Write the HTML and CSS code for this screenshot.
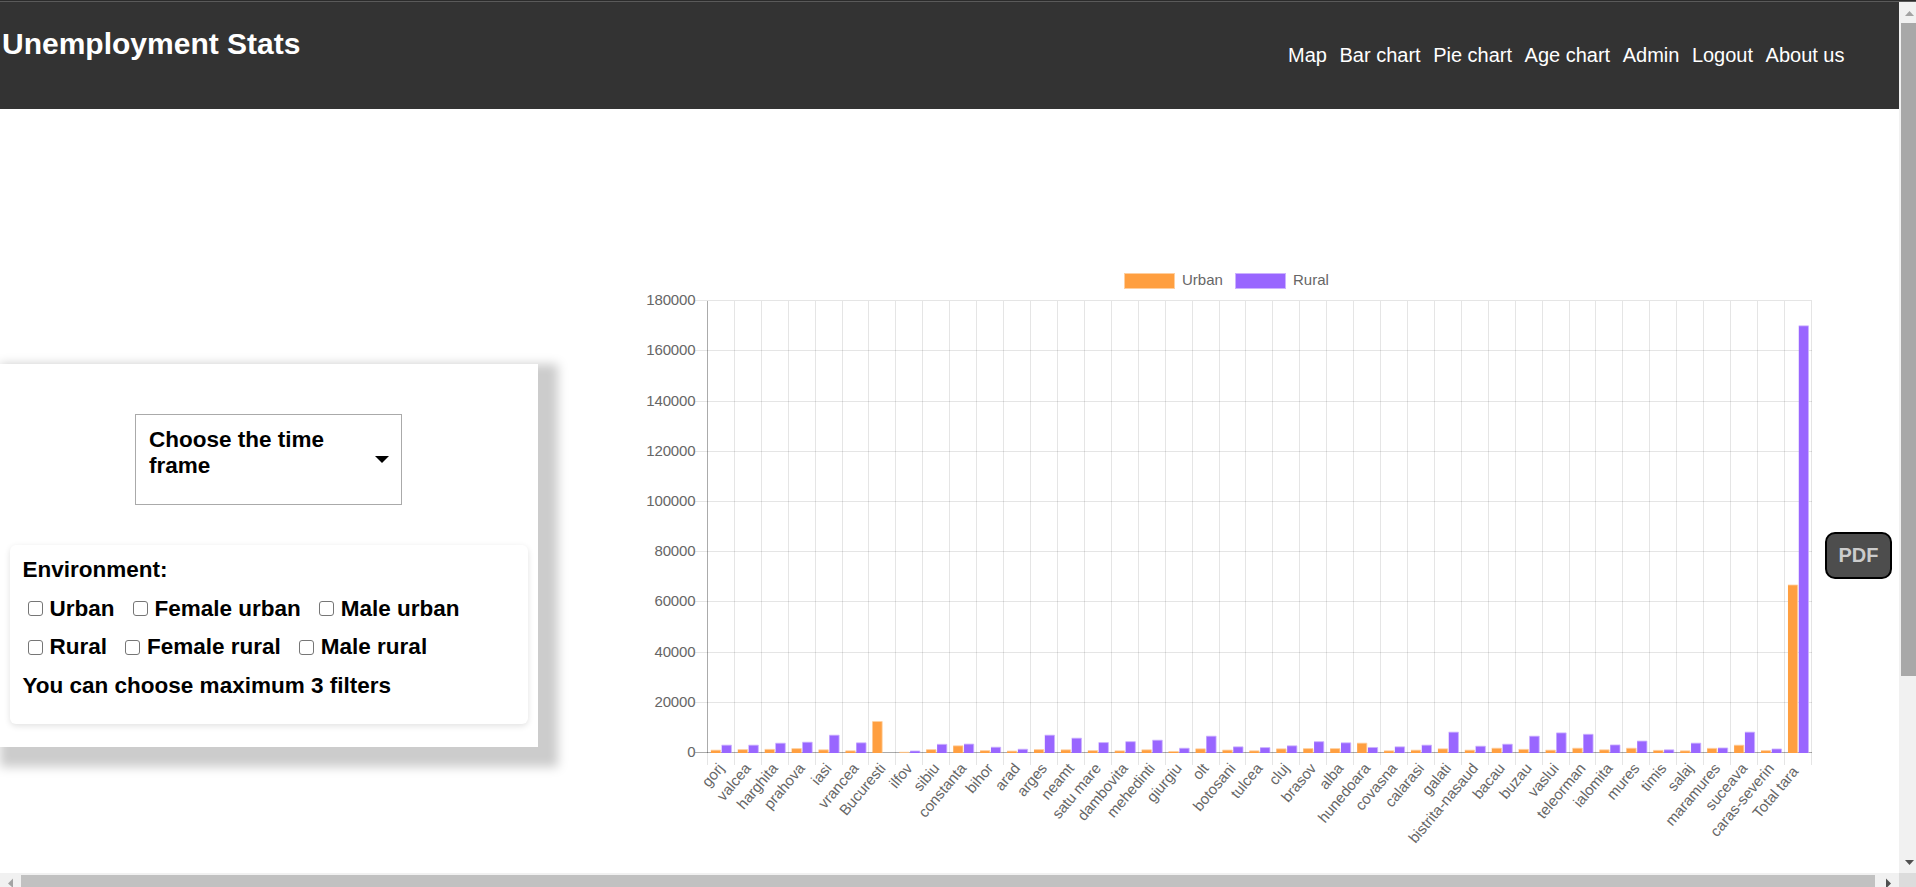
FILE: index.html
```html
<!DOCTYPE html>
<html lang="en">
<head>
<meta charset="utf-8">
<title>Unemployment Stats</title>
<link rel="stylesheet" href="styles.css">
</head>
<body>
<div class="window">
  <div class="viewport">
    <header class="header">
      <h1 class="title">Unemployment Stats</h1>
      <nav class="nav">
        <a>Map</a><a>Bar chart</a><a>Pie chart</a><a>Age chart</a><a>Admin</a><a>Logout</a><a>About us</a>
      </nav>
    </header>
    <main class="main">
      <section class="panel">
        <div class="timeframe">
          <span class="timeframe-label">Choose the time frame</span>
          <svg class="caret" width="14" height="7" viewBox="0 0 14 7"><path d="M0 0H14L7 7Z"/></svg>
        </div>
        <div class="filters">
          <div class="line">Environment:</div>
          <div class="line row">
            <label class="option"><input type="checkbox">Urban</label>
            <label class="option"><input type="checkbox">Female urban</label>
            <label class="option"><input type="checkbox">Male urban</label>
          </div>
          <div class="line row">
            <label class="option"><input type="checkbox">Rural</label>
            <label class="option"><input type="checkbox">Female rural</label>
            <label class="option"><input type="checkbox">Male rural</label>
          </div>
          <div class="line">You can choose maximum 3 filters</div>
        </div>
      </section>
      <svg class="chart" id="chart" width="1191" height="604" viewBox="630 260 1191 604"></svg>
      <button class="pdf">PDF</button>
    </main>
  </div>
  <div class="vscroll">
    <svg class="v-arrow" width="17" height="21" viewBox="0 0 17 21"><path class="arrow-off" d="M6 14L10.5 9L15 14Z"/></svg>
    <div class="v-thumb"></div>
    <svg class="v-down" width="17" height="21" viewBox="0 0 17 21"><path class="arrow-on" d="M6 8H15L10.5 13Z"/></svg>
  </div>
  <div class="hscroll">
    <svg width="21" height="14" viewBox="0 0 21 14"><path class="arrow-off" d="M13 5.5V14H12L8 10.5Z"/></svg>
    <div class="h-thumb"></div>
    <svg width="24" height="14" viewBox="0 0 24 14"><path class="arrow-on" d="M11 5.5L16 10.5L12.5 14H11Z"/></svg>
  </div>
  <div class="corner"></div>
</div>
<script src="chart.js"></script>
</body>
</html>
```
FILE: styles.css
```css
body { margin: 0; font-family: "Liberation Sans", Arial, sans-serif; background: #fff; overflow: hidden; }

.window {
  display: grid;
  grid-template: 871px 14px / 1899px 17px;
  width: 1916px;
  height: 887px;
  box-sizing: border-box;
  border-top: 1px solid #2b2b2b;
  padding-top: 1px;
  background: linear-gradient(#5a5a5a 0 1px, #fff 1px);
}
.viewport { overflow: hidden; background: #fff; }

.header {
  display: flex;
  justify-content: space-between;
  height: 107px;
  box-sizing: border-box;
  padding: 17px 54.5px 0 2px;
  background: #333;
  color: #fff;
}
.title { margin: 0; font-size: 30px; line-height: 50px; font-weight: bold; }
.nav { display: flex; gap: 12.5px; padding-top: 24px; font-size: 20px; line-height: 24px; }

.main { display: flex; align-items: flex-start; height: 764px; }

.panel {
  width: 538px;
  height: 383px;
  box-sizing: border-box;
  margin-top: 255px;
  padding: 50px 10px 0;
  background: #fff;
  box-shadow: 10px 10px 10px 10px #ccc;
}
.timeframe {
  display: flex;
  justify-content: space-between;
  width: 267px;
  height: 91px;
  box-sizing: border-box;
  margin-left: 125px;
  padding: 12px 12px 12px 13px;
  border: 1px solid #aaa;
  font-size: 22.5px;
  line-height: 26px;
  font-weight: bold;
}
.timeframe-label { width: 200px; }
.caret { margin-top: 29px; flex: none; }

.filters {
  width: 518px;
  height: 179px;
  box-sizing: border-box;
  margin-top: 40px;
  padding: 6px 12.5px;
  border-radius: 6px;
  box-shadow: 0 2px 6px rgba(0, 0, 0, .12);
  font-size: 22.5px;
  font-weight: bold;
}
.line { height: 38.5px; line-height: 38.5px; }
.row { display: flex; gap: 18px; }
.option { display: flex; align-items: center; gap: 7px; white-space: nowrap; }
.option input {
  appearance: none;
  width: 15px;
  height: 15px;
  margin: 0;
  border: 1px solid #767676;
  border-radius: 3px;
  background: #fff;
}
.option:first-child { margin-left: 5px; }

.chart { flex: none; margin: 151px 4px 0 92px; font-size: 15px; }
.chart text { fill: #666; }
.grid { stroke: rgba(0, 0, 0, .1); }
.axis { stroke: rgba(0, 0, 0, .33); }
.urban { fill: #ff9f40; stroke: #ffcf9f; }
.rural { fill: #9966ff; stroke: #ccb2ff; }
.bar { stroke: none; }
.edge { fill: none; }

.pdf {
  flex: none;
  width: 67px;
  height: 47px;
  margin-top: 423px;
  padding: 0 0 1px;
  border: 2px solid #000;
  border-radius: 10px;
  background: #4d4d4d;
  color: #ccc;
  font: bold 20px "Liberation Sans", Arial, sans-serif;
}

.vscroll { display: flex; flex-direction: column; background: #f1f1f1; }
.v-arrow, .v-down { flex: none; }
.v-thumb { width: 15px; height: 653px; margin-left: 2px; background: #a8a8a8; }
.v-down { margin-top: auto; }
.hscroll { display: flex; background: #f1f1f1; }
.h-thumb { flex: 1; margin-top: 2px; background: #c1c1c1; }
.corner { background: #dcdcdc; }
.arrow-off { fill: #a3a3a3; }
.arrow-on { fill: #505050; }
```
FILE: chart.js
```js
// Each row: county, urban value, rural value
const data = [
  ["gorj", 930, 2920], ["valcea", 1150, 2920], ["harghita", 1250, 3700], ["prahova", 1550, 4100],
  ["iasi", 1060, 6900], ["vrancea", 660, 3850], ["Bucuresti", 12350, 0], ["ilfov", 100, 600],
  ["sibiu", 1150, 3250], ["constanta", 2650, 3350], ["bihor", 750, 2100], ["arad", 560, 1300],
  ["arges", 1150, 6900], ["neamt", 1060, 5700], ["satu mare", 750, 3950], ["dambovita", 650, 4300],
  ["mehedinti", 1060, 4900], ["giurgiu", 400, 1700], ["olt", 1450, 6500], ["botosani", 960, 2250],
  ["tulcea", 660, 1950], ["cluj", 1450, 2650], ["brasov", 1550, 4300], ["alba", 1550, 3850],
  ["hunedoara", 3720, 2000], ["covasna", 660, 2250], ["calarasi", 930, 2920], ["galati", 1450, 8100],
  ["bistrita-nasaud", 930, 2500], ["bacau", 1700, 3300], ["buzau", 1250, 6500], ["vaslui", 930, 7800],
  ["teleorman", 1700, 7250], ["ialomita", 1060, 3000], ["mures", 1700, 4550], ["timis", 850, 1060],
  ["salaj", 660, 3720], ["maramures", 1650, 1800], ["suceava", 2900, 8100], ["caras-severin", 750, 1400],
  ["Total tara", 66700, 169900]
];

const left = 707.5, right = 1811.5, top0 = 300.5, base = 752.5, max = 180000;
const step = (right - left) / data.length;
const snap = v => Math.floor(v) + 0.5;
const yOf = v => base - v / max * (base - top0);
let out = "";

const line = (cls, x1, y1, x2, y2) => {
  out += `<line class="${cls}" x1="${x1}" y1="${y1}" x2="${x2}" y2="${y2}"/>`;
};

for (let v = 0; v <= max; v += 20000) {
  const y = snap(yOf(v) + 0.1);
  line(v ? "grid" : "axis", 695, y, 1812, y);
  out += `<text x="695.5" y="${y + 4.5}" text-anchor="end" textLength="${String(v).length * 8.2}">${v}</text>`;
}
for (let i = 0; i <= data.length; i++) {
  const x = snap(left + i * step - 0.1 + (i ? 0 : 0.1));
  line(i ? "grid" : "axis", x, 301, x, i ? 765 : 753);
  if (!i) line("grid", x, 753, x, 765);
}

// Solid bar with a pale edge along its top and right side
const bar = (cls, x, v) => {
  if (!v) return;
  const y = yOf(v), w = 9.7;
  out += `<rect class="${cls} bar" x="${x}" y="${y}" width="${w}" height="${753 - y}"/>`;
  out += `<path class="${cls} edge" stroke-opacity=".8" d="M${x} ${y}H${x + w}V752.5"/>`;
};
data.forEach(([name, urban, rural], i) => {
  const x = left + i * step;
  bar("urban", x + 3.4, urban);
  bar("rural", x + 14.2, rural);
  const pad = name === "Total tara" ? -4.2 : 0;
  out += `<text transform="translate(${x + step / 2} 765.5) rotate(-50)" x="${pad}" y="5" text-anchor="end">${name}</text>`;
});

out += `<rect class="urban" x="1124.5" y="273.5" width="50" height="15"/><text x="1182" y="285">Urban</text>`;
out += `<rect class="rural" x="1235.5" y="273.5" width="50" height="15"/><text x="1293" y="285">Rural</text>`;
document.getElementById("chart").innerHTML = out;
```
